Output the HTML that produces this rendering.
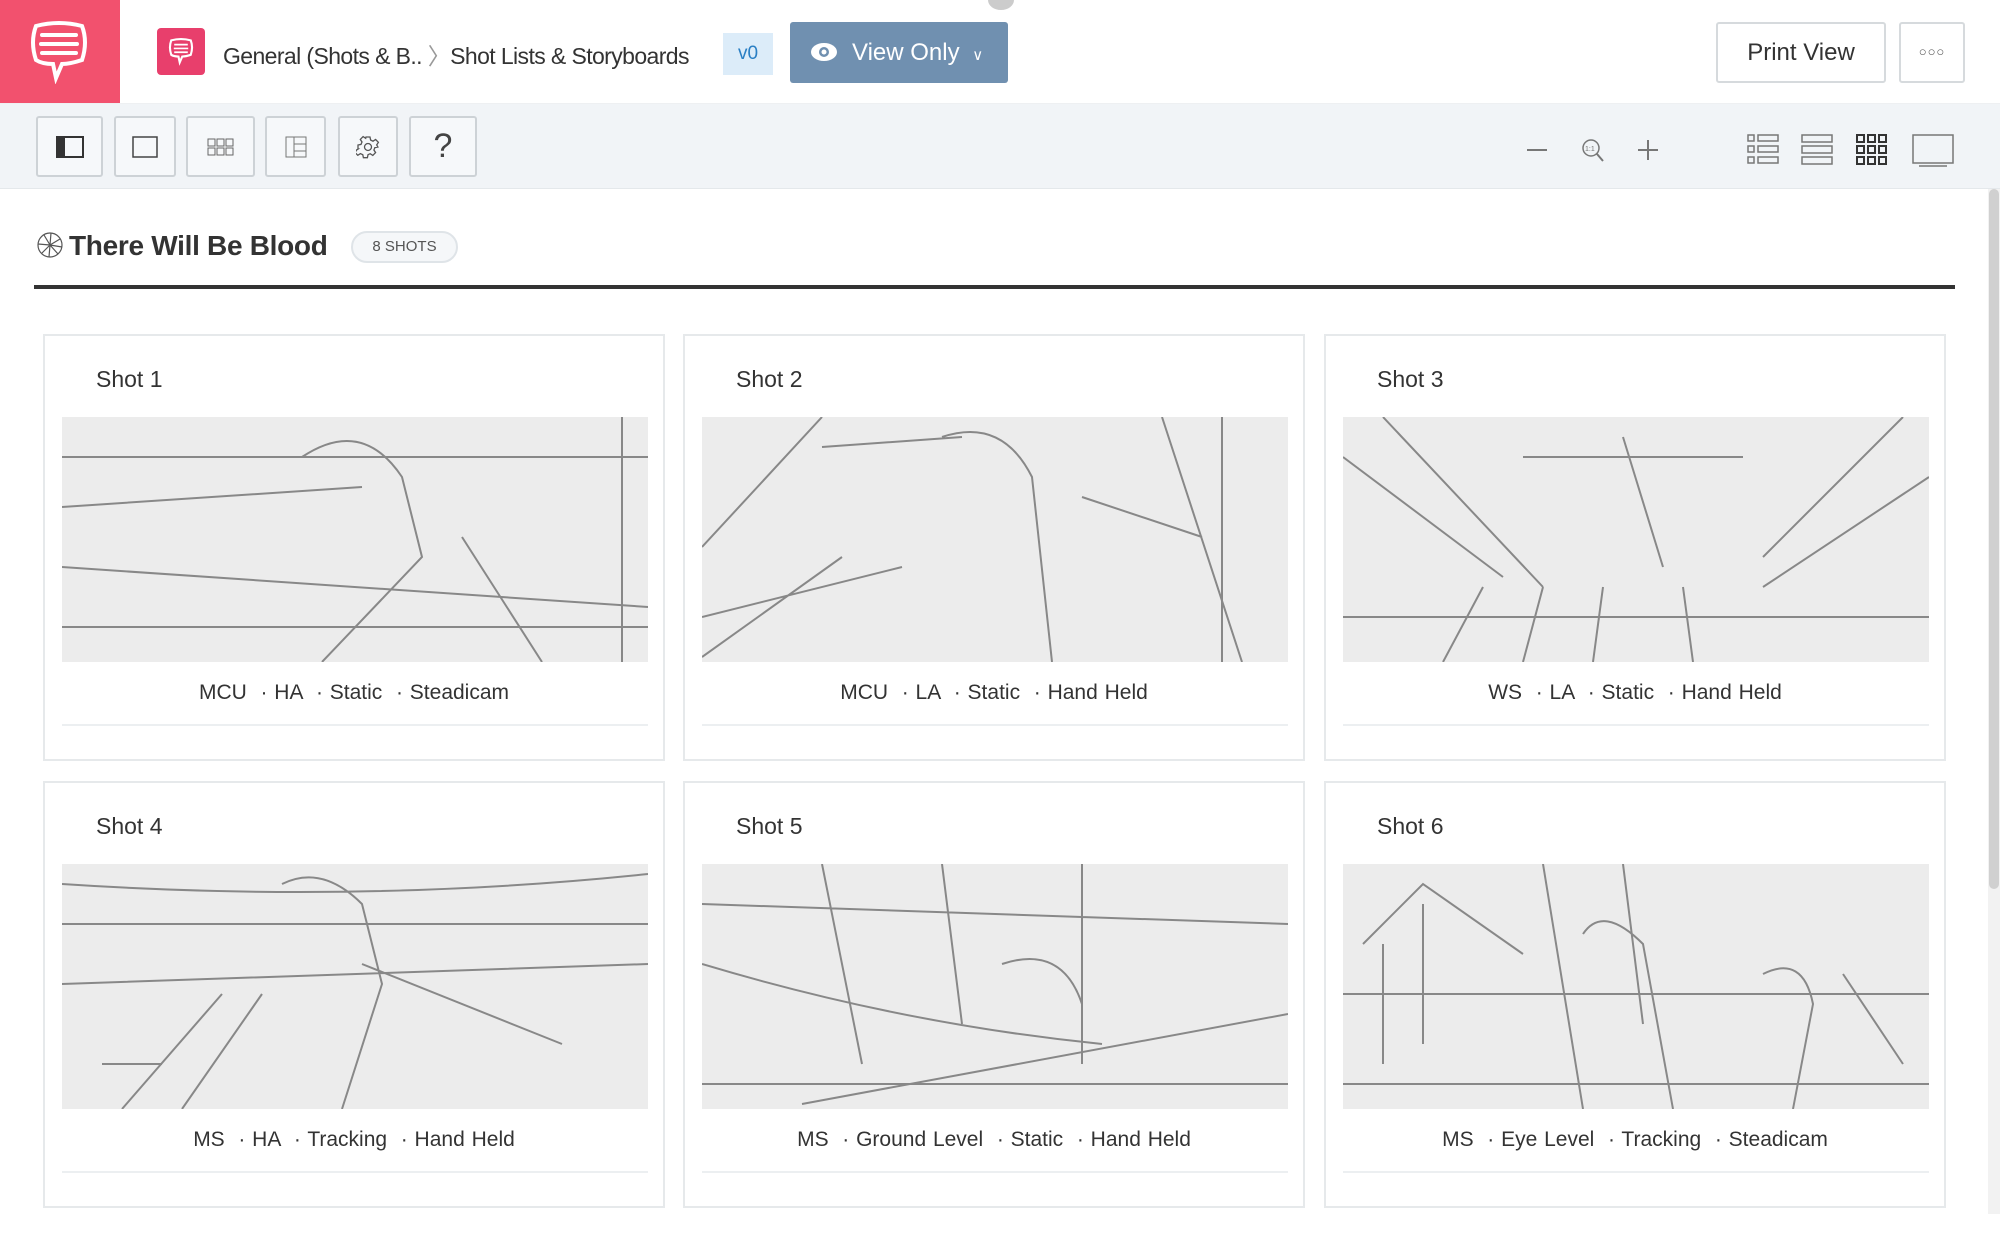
<!DOCTYPE html>
<html><head><meta charset="utf-8"><style>
*{box-sizing:border-box;margin:0;padding:0}
body{width:2000px;height:1249px;overflow:hidden;background:#fff;font-family:"Liberation Sans",sans-serif;color:#333;position:relative}
.abs{position:absolute}
.btn{position:absolute;border:2px solid #d6dadd;border-radius:3px;background:#fff}
.tb{position:absolute;top:116px;height:61px;border:2px solid #cdd2d6;border-radius:3px;background:#f6f8fa;display:flex;align-items:center;justify-content:center}
.card{position:absolute;width:622px;height:427px;border:2px solid #e6e9eb;background:#fff}
.card h3{position:absolute;left:51px;top:30px;font-weight:normal;font-size:23px;color:#333}
.card .img{position:absolute;left:17px;top:81px;width:586px;height:245px;background:#ececec;overflow:hidden}
.card .cap{position:absolute;left:0;right:0;top:345px;text-align:center;font-size:21px;color:#333;word-spacing:1px}
.card .ln{position:absolute;left:17px;width:586px;top:388px;height:2px;background:#eceff1}
</style></head><body>
<!-- header -->
<div class="abs" style="left:0;top:0;width:120px;height:103px;background:#f2516e"></div>
<svg class="abs" style="left:26px;top:18px" width="66" height="66" viewBox="0 0 66 66"><path d="M10 8 Q33 2 56 8 Q62 24 56 42 Q44 46 36 46 L30 60 L27 46 Q16 46 10 42 Q4 24 10 8Z" fill="none" stroke="#fff" stroke-width="4"/><path d="M16 17 H50 M15 26 H51 M16 35 H50" stroke="#fff" stroke-width="4" stroke-linecap="round"/></svg>
<div class="abs" style="left:157px;top:28px;width:48px;height:47px;background:#e83f6c;border-radius:4px"></div>
<svg class="abs" style="left:167px;top:36px" width="28" height="30" viewBox="0 0 66 66"><path d="M10 8 Q33 2 56 8 Q62 24 56 42 Q44 46 36 46 L30 60 L27 46 Q16 46 10 42 Q4 24 10 8Z" fill="none" stroke="#fff" stroke-width="5"/><path d="M17 18 H49 M16 27 H50 M17 36 H49" stroke="#fff" stroke-width="4"/></svg>
<div class="abs" style="left:223px;top:37px;font-size:23px;color:#333;letter-spacing:-0.6px;white-space:nowrap">General (Shots &amp; B.. <span style="color:#999">&#x3009;</span>Shot Lists &amp; Storyboards</div>
<div class="abs" style="left:723px;top:33px;width:50px;height:42px;background:#dcecf9;color:#2a7fc4;font-size:19px;text-align:center;line-height:42px">v0</div>
<div class="abs" style="left:790px;top:22px;width:218px;height:61px;background:#7090b0;border-radius:3px;color:#fff;font-size:24px;line-height:61px;padding-left:62px">View Only <span style="font-size:15px;margin-left:6px">&#x2228;</span></div>
<svg class="abs" style="left:810px;top:40px" width="28" height="24" viewBox="0 0 28 24"><ellipse cx="14" cy="12" rx="13" ry="9" fill="#fff"/><circle cx="14" cy="12" r="5" fill="#7090b0"/><circle cx="14" cy="12" r="2.5" fill="#fff"/></svg>
<div class="abs" style="left:988px;top:-10px;width:26px;height:20px;border-radius:50%;background:#ccc"></div>
<div class="btn" style="left:1716px;top:22px;width:170px;height:61px;font-size:24px;text-align:center;line-height:57px;color:#333">Print View</div>
<div class="btn" style="left:1899px;top:22px;width:66px;height:61px;font-size:13px;text-align:center;line-height:55px;color:#555;letter-spacing:1px">○○○</div>
<!-- toolbar -->
<div class="abs" style="left:0;top:103px;width:2000px;height:86px;background:#f1f4f7;border-top:1px solid #eef0f2;border-bottom:1px solid #e4e8eb"></div>
<div class="tb" style="left:36px;width:67px"><svg width="28" height="22"><rect x="1" y="1" width="26" height="20" fill="none" stroke="#333" stroke-width="2"/><rect x="1" y="1" width="8" height="20" fill="#333"/></svg></div>
<div class="tb" style="left:114px;width:62px"><svg width="26" height="22"><rect x="1" y="1" width="24" height="20" fill="none" stroke="#444" stroke-width="1.5"/></svg></div>
<div class="tb" style="left:186px;width:69px"><svg width="28" height="18" stroke="#666" fill="none"><rect x="1" y="1" width="7" height="7"/><rect x="10" y="1" width="7" height="7"/><rect x="19" y="1" width="7" height="7"/><rect x="1" y="10" width="7" height="7"/><rect x="10" y="10" width="7" height="7"/><rect x="19" y="10" width="7" height="7"/></svg></div>
<div class="tb" style="left:265px;width:61px"><svg width="22" height="22" stroke="#777" fill="none"><rect x="1" y="1" width="20" height="20"/><line x1="9" y1="1" x2="9" y2="21"/><line x1="9" y1="8" x2="21" y2="8"/><line x1="9" y1="15" x2="21" y2="15"/></svg></div>
<div class="tb" style="left:338px;width:60px"><svg width="24" height="24" viewBox="0 0 24 24" fill="none" stroke="#555" stroke-width="1.3"><circle cx="12" cy="12" r="3.5"/><path d="M10 2h4l.6 3 2.4 1.2 2.6-1.7 2.8 2.8-1.7 2.6L21.9 12v0l-3 .6-1 2.4 1.7 2.6-2.8 2.8-2.6-1.7-2.2 1-.6 3h-4l-.6-3-2.4-1.1-2.6 1.7-2.8-2.8 1.7-2.6L2.1 14H2v-4l3-.6 1-2.4L4.3 4.4l2.8-2.8 2.6 1.7L10 2z"/></svg></div>
<div class="tb" style="left:409px;width:68px;font-size:34px;color:#444">?</div>
<svg class="abs" style="left:1527px;top:138px" width="140" height="26" fill="none" stroke="#777" stroke-width="2"><line x1="0" y1="12" x2="20" y2="12"/><circle cx="64" cy="10" r="8" stroke-width="1.5"/><line x1="70" y1="16" x2="76" y2="23"/><text x="58" y="13" font-size="7" fill="#777" stroke="none" font-family="Liberation Sans">1:1</text><line x1="111" y1="12" x2="131" y2="12"/><line x1="121" y1="2" x2="121" y2="22"/></svg>
<svg class="abs" style="left:1747px;top:133px" width="210" height="34" fill="none" stroke="#777" stroke-width="1.5"><rect x="1" y="2" width="6" height="6"/><rect x="11" y="2" width="20" height="6"/><rect x="1" y="13" width="6" height="6"/><rect x="11" y="13" width="20" height="6"/><rect x="1" y="24" width="6" height="6"/><rect x="11" y="24" width="20" height="6"/>
<rect x="55" y="2" width="30" height="7"/><rect x="55" y="13" width="30" height="7"/><rect x="55" y="24" width="30" height="7"/>
<g stroke="#333" stroke-width="2"><rect x="110" y="2" width="7" height="7"/><rect x="121" y="2" width="7" height="7"/><rect x="132" y="2" width="7" height="7"/><rect x="110" y="13" width="7" height="7"/><rect x="121" y="13" width="7" height="7"/><rect x="132" y="13" width="7" height="7"/><rect x="110" y="24" width="7" height="7"/><rect x="121" y="24" width="7" height="7"/><rect x="132" y="24" width="7" height="7"/></g>
<rect x="166" y="2" width="40" height="28"/><line x1="172" y1="33" x2="200" y2="33"/></svg>
<!-- title -->
<svg class="abs" style="left:36px;top:231px" width="28" height="28" fill="none" stroke="#555" stroke-width="1.2"><circle cx="14" cy="14" r="12"/><path d="M8 4L14 14M24 8L14 14M22 23L14 14M6 22L14 14M2 13L14 14M15 2L14 14M26 16L14 14M13 26L14 14"/></svg>
<div class="abs" style="left:69px;top:230px;font-size:28px;font-weight:bold;color:#333;letter-spacing:-0.3px">There Will Be Blood</div>
<div class="abs" style="left:351px;top:231px;width:107px;height:32px;border:2px solid #dfe4e8;border-radius:16px;background:#f5f7f9;font-size:15px;color:#555;text-align:center;line-height:28px">8 SHOTS</div>
<div class="abs" style="left:34px;top:285px;width:1921px;height:4px;background:#333"></div>
<!-- scrollbar -->
<div class="abs" style="left:1988px;top:189px;width:12px;height:1025px;background:#f2f2f2"></div>
<div class="abs" style="left:1989px;top:189px;width:10px;height:700px;background:#d0d0d0;border-radius:5px"></div>
<!-- cards -->
<div class="card" style="left:43px;top:334px"><h3>Shot 1</h3><div class="img"><svg width="586" height="245" stroke="#888" fill="none" stroke-width="2"><path d="M0 40H586M0 90L300 70M0 150L586 190M0 210H586M240 40Q300 0 340 60L360 140L260 245M400 120L480 245M560 0V245"/></svg></div><div class="cap">MCU &nbsp;· HA &nbsp;· Static &nbsp;· Steadicam</div><div class="ln"></div></div>
<div class="card" style="left:683px;top:334px"><h3>Shot 2</h3><div class="img"><svg width="586" height="245" stroke="#888" fill="none" stroke-width="2"><path d="M0 130L120 0M0 240L140 140M0 200L200 150M240 20Q300 0 330 60L350 245M380 80L500 120M460 0L540 245M520 0V245M120 30L260 20"/></svg></div><div class="cap">MCU &nbsp;· LA &nbsp;· Static &nbsp;· Hand Held</div><div class="ln"></div></div>
<div class="card" style="left:1324px;top:334px"><h3>Shot 3</h3><div class="img"><svg width="586" height="245" stroke="#888" fill="none" stroke-width="2"><path d="M0 40L160 160M40 0L200 170M586 60L420 170M560 0L420 140M0 200H586M140 170L100 245M200 170L180 245M260 170L250 245M340 170L350 245M280 20L320 150M180 40H400"/></svg></div><div class="cap">WS &nbsp;· LA &nbsp;· Static &nbsp;· Hand Held</div><div class="ln"></div></div>
<div class="card" style="left:43px;top:781px"><h3>Shot 4</h3><div class="img"><svg width="586" height="245" stroke="#888" fill="none" stroke-width="2"><path d="M0 20Q300 40 586 10M0 60H586M0 120L586 100M220 20Q260 0 300 40L320 120L280 245M160 130L60 245M200 130L120 245M300 100L500 180M40 200H100"/></svg></div><div class="cap">MS &nbsp;· HA &nbsp;· Tracking &nbsp;· Hand Held</div><div class="ln"></div></div>
<div class="card" style="left:683px;top:781px"><h3>Shot 5</h3><div class="img"><svg width="586" height="245" stroke="#888" fill="none" stroke-width="2"><path d="M0 40L586 60M120 0L160 200M240 0L260 160M380 0V200M0 100Q200 160 400 180M0 220H586M100 240L586 150M300 100Q360 80 380 140"/></svg></div><div class="cap">MS &nbsp;· Ground Level &nbsp;· Static &nbsp;· Hand Held</div><div class="ln"></div></div>
<div class="card" style="left:1324px;top:781px"><h3>Shot 6</h3><div class="img"><svg width="586" height="245" stroke="#888" fill="none" stroke-width="2"><path d="M20 80L80 20L180 90M40 80V200M80 40V180M200 0L240 245M280 0L300 160M0 130H586M240 70Q260 40 300 80L330 245M420 110Q460 90 470 140L450 245M500 110L560 200M0 220H586"/></svg></div><div class="cap">MS &nbsp;· Eye Level &nbsp;· Tracking &nbsp;· Steadicam</div><div class="ln"></div></div>
</body></html>
